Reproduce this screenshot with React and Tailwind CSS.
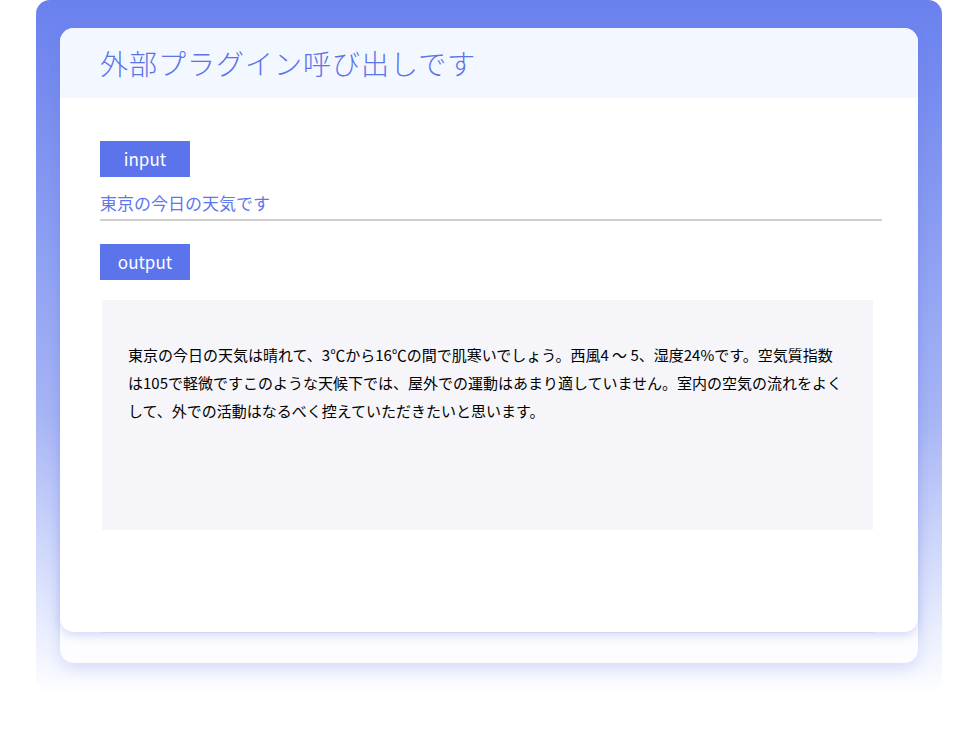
export default function App() {
  const jp = { fontFamily: '"Noto Sans CJK JP", "Noto Sans", sans-serif' };
  return (
    <div className="w-[978px] h-[732px] bg-white" style={jp}>
      <div className="ml-[36px] w-[906px] h-[695px] rounded-b-[18px] rounded-t-[14px] bg-gradient-to-b from-[#6a80ee] via-[#a7b5f5] via-60% to-white pt-[28px] px-[24px]">
        <div className="relative">
          <div className="absolute left-0 right-0 top-[40px] h-[595px] rounded-[14px] bg-[#fdfdff] shadow-[0_6px_16px_rgba(120,140,230,0.25)]">
            <div className="absolute left-[42px] right-[44px] bottom-[30px] h-[6px] bg-[#eeeef6]"></div>
          </div>
          <div className="relative h-[604px] rounded-[14px] bg-white overflow-hidden shadow-[0_4px_10px_rgba(100,120,230,0.25)]">
            <div className="h-[70px] bg-[#f3f7ff] flex items-center pl-[40px]">
              <h1 className="text-[28px] font-light text-[#5b73e8] tracking-[1px]">外部プラグイン呼び出しです</h1>
            </div>
            <div className="px-[40px] pt-[43px]">
              <div className="w-[90px] h-[36px] bg-[#5b74eb] text-white text-[17px] flex items-center justify-center">input</div>
              <div className="mt-[14px] pb-[4px] border-b-2 border-[#cfcfcf] text-[17px] text-[#5f77ec] leading-[24px] w-[782px]">東京の今日の天気です</div>
              <div className="mt-[23px] w-[90px] h-[36px] bg-[#5b74eb] text-white text-[17px] flex items-center justify-center">output</div>
              <div className="mt-[20px] ml-[2px] w-[771px] h-[230px] bg-[#f5f5fa] px-[26px] pt-[41px] text-[15px] leading-[28px] text-black">
                東京の今日の天気は晴れて、3℃から16℃の間で肌寒いでしょう。西風4 ～ 5、湿度24%です。空気質指数は105で軽微ですこのような天候下では、屋外での運動はあまり適していません。室内の空気の流れをよくして、外での活動はなるべく控えていただきたいと思います。
              </div>
            </div>
          </div>
        </div>
      </div>
    </div>
  );
}
